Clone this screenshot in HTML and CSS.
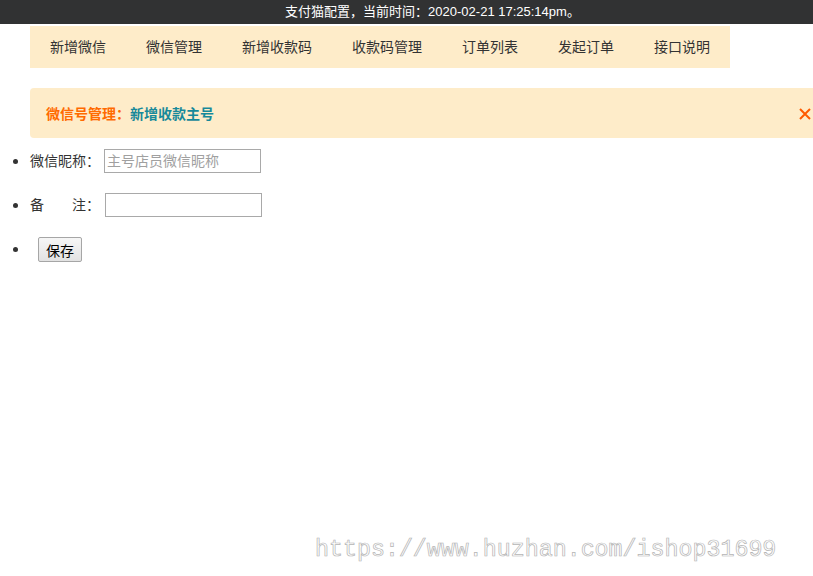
FILE: index.html
```html
<!DOCTYPE html>
<html lang="zh-CN">
<head>
  <meta charset="UTF-8">
  <title>支付猫配置</title>
  <link rel="stylesheet" href="styles.css">
</head>
<body>
  <div class="topbar">支付猫配置，当前时间：2020-02-21 17:25:14pm。</div>

  <ul class="nav">
    <li><a href="#">新增微信</a></li>
    <li><a href="#">微信管理</a></li>
    <li><a href="#">新增收款码</a></li>
    <li><a href="#">收款码管理</a></li>
    <li><a href="#">订单列表</a></li>
    <li><a href="#">发起订单</a></li>
    <li><a href="#">接口说明</a></li>
  </ul>

  <div class="alert">
    <div class="alert-title"><span class="crumb">微信号管理：</span><span class="current">新增收款主号</span></div>
    <svg class="close" width="12" height="12" viewBox="0 0 12 12">
      <path d="M1 1L11 11M11 1L1 11" stroke="#ff5a00" stroke-width="2" fill="none"/>
    </svg>
  </div>

  <ul class="form">
    <li><label>微信昵称：</label><input type="text" placeholder="主号店员微信昵称"></li>
    <li><label>备　　注：</label><input type="text" class="note"></li>
    <li><button class="save">保存</button></li>
  </ul>

  <div class="watermark">https://www.huzhan.com/ishop31699</div>
</body>
</html>
```

FILE: styles.css
```css
body {
  margin: 0;
  font-family: "Liberation Sans", "Noto Sans CJK SC", sans-serif;
  font-size: 14px;
  color: #333;
  background: #fff;
}

.topbar {
  height: 24px;
  line-height: 24px;
  background: #313233;
  color: #fff;
  font-size: 13px;
  text-align: center;
  padding-left: 52px;
}

.nav {
  display: flex;
  width: max-content;
  margin: 2px 0 0 30px;
  padding: 0;
  list-style: none;
  background: #feecc9;
}

.nav li a {
  display: block;
  padding: 0 20px;
  line-height: 42px;
  color: #333;
  text-decoration: none;
}

.alert {
  display: flex;
  align-items: center;
  justify-content: space-between;
  height: 50px;
  margin: 20px -30px 0 30px;
  padding: 0 32px 0 16px;
  background: #feecc9;
  border-radius: 4px;
}

.alert-title {
  font-weight: bold;
  font-size: 14px;
}

.crumb {
  color: #ff6a00;
}

.current {
  color: #17899a;
}

.close {
  margin-top: 2px;
}

.form {
  margin: 10px 0 0;
  padding-left: 30px;
}

.form li {
  height: 24px;
  line-height: 24px;
  margin-bottom: 20px;
}

.form li::marker {
  font-size: 18px;
}

.form label {
  color: #333;
}

.form input {
  box-sizing: border-box;
  width: 157px;
  height: 24px;
  margin-left: 4px;
  padding: 0 2px;
  border: 1px solid #a9a9a9;
  font-family: "Liberation Sans", "Noto Sans CJK SC", sans-serif;
  font-size: 14px;
  vertical-align: top;
}

.form input.note {
  margin-left: 5px;
}

.form input::placeholder {
  color: #a0a0a0;
}

.save {
  margin-left: 8px;
  height: 25px;
  width: 44px;
  padding: 0;
  font-family: "Liberation Sans", "Noto Sans CJK SC", sans-serif;
  font-size: 14px;
  color: #000;
  background: linear-gradient(#f6f6f6, #e2e2e2);
  border: 1px solid #a6a6a6;
  border-radius: 2px;
  vertical-align: top;
}

.watermark {
  position: absolute;
  left: 315px;
  top: 535px;
  font-family: "Liberation Mono", monospace;
  font-size: 23.3px;
  line-height: 30px;
  color: #fff;
  -webkit-text-stroke: 0.7px #b4b4b4;
}
```
